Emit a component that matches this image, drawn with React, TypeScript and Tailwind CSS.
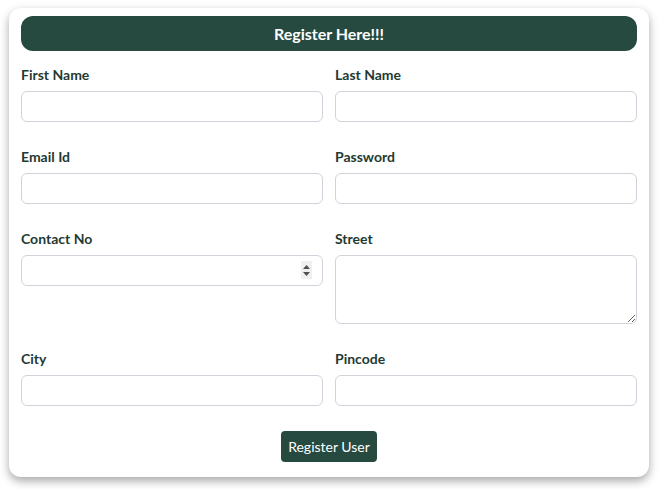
import React from "react";

type Field = {
  id: string;
  label: string;
  kind?: "text" | "password" | "number" | "textarea";
};

const rows: Field[][] = [
  [
    { id: "firstName", label: "First Name" },
    { id: "lastName", label: "Last Name" },
  ],
  [
    { id: "email", label: "Email Id" },
    { id: "password", label: "Password", kind: "password" },
  ],
  [
    { id: "contact", label: "Contact No", kind: "number" },
    { id: "street", label: "Street", kind: "textarea" },
  ],
  [
    { id: "city", label: "City" },
    { id: "pincode", label: "Pincode" },
  ],
];

const inputBox =
  "block w-full h-[31px] rounded-[6px] border border-[#ced4da] bg-white px-3 text-sm text-[#212529] outline-none";

function Spinner() {
  return (
    <div className="absolute right-[11px] top-[6px] flex h-[18px] w-[11px] flex-col items-center justify-center gap-[3px] bg-[#f0f0f0]">
      <svg width="7" height="4" viewBox="0 0 7 4">
        <path d="M3.5 0 L7 4 L0 4 Z" fill="#505050" />
      </svg>
      <svg width="7" height="4" viewBox="0 0 7 4">
        <path d="M0 0 L7 0 L3.5 4 Z" fill="#505050" />
      </svg>
    </div>
  );
}

function FormField({ f }: { f: Field }) {
  return (
    <div className="flex flex-col">
      <label
        htmlFor={f.id}
        className="mb-[6px] text-[14px] font-bold leading-[21px] text-[#1f3a33]"
      >
        {f.label}
      </label>
      {f.kind === "textarea" ? (
        <textarea
          id={f.id}
          className="block h-[69px] w-full rounded-[6px] border border-[#ced4da] bg-white px-3 py-1 text-sm outline-none"
        />
      ) : f.kind === "number" ? (
        <div className="relative">
          <input id={f.id} type="text" inputMode="numeric" className={inputBox} />
          <Spinner />
        </div>
      ) : (
        <input id={f.id} type={f.kind === "password" ? "password" : "text"} className={inputBox} />
      )}
    </div>
  );
}

export default function App() {
  return (
    <div
      className="min-h-[489px] w-[659px] bg-white pl-[9px] pr-[10px] pt-[8px]"
      style={{ fontFamily: "Lato, 'Open Sans', sans-serif" }}
    >
      <div className="flex flex-col rounded-[12px] bg-white px-[12px] pb-[15px] pt-[8px] shadow-[0_4px_10px_rgba(0,0,0,0.35)]">
        <div className="flex h-[35px] items-center justify-center rounded-[12px] bg-[#264a40]">
          <h2 className="pt-px text-[16px] font-bold text-white">Register Here!!!</h2>
        </div>
        <form className="mt-[13px] flex flex-col gap-[24px]" onSubmit={(e) => e.preventDefault()}>
          {rows.map((row, i) => (
            <div key={i} className="grid grid-cols-2 items-start gap-x-[12px]">
              {row.map((f) => (
                <FormField key={f.id} f={f} />
              ))}
            </div>
          ))}
          <div className="mt-px flex justify-center">
            <button
              type="submit"
              className="h-[31px] w-[96px] rounded-[4px] bg-[#264a40] text-[14px] text-white"
            >
              Register User
            </button>
          </div>
        </form>
      </div>
    </div>
  );
}
